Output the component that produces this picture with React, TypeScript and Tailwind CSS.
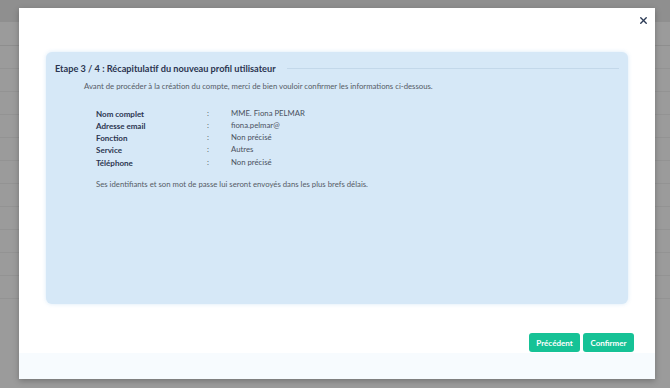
import { X } from 'lucide-react';

const rows: [string, string][] = [
  ['Nom complet', 'MME. Fiona PELMAR'],
  ['Adresse email', 'fiona.pelmar@'],
  ['Fonction', 'Non précisé'],
  ['Service', 'Autres'],
  ['Téléphone', 'Non précisé'],
];

// Greyed page behind the modal
function Backdrop() {
  return (
    <div className="absolute inset-0 bg-[#9b9b9b]">
      <div className="h-[22px] bg-[#8f8f8f]" />
      <div className="h-[24px] border-b border-[#8e8e8e]" />
      {Array.from({ length: 11 }).map((_, i) => (
        <div key={i} className="h-[23px] border-b border-[#939393]" />
      ))}
    </div>
  );
}

export default function App() {
  return (
    <div className="relative w-[670px] h-[388px] overflow-hidden font-['Lato',sans-serif]">
      <Backdrop />
      <div className="absolute left-[19px] top-[8px] w-[636px] h-[371px] bg-white flex flex-col shadow-[0_2px_6px_rgba(0,0,0,0.25)]">
        <div className="relative flex-1 px-[27px] pt-[44px]">
          <button className="absolute right-[6px] top-[7px] text-[#2b3a55]">
            <X size={11} strokeWidth={3} />
          </button>
          <div className="h-[252px] bg-[#d6e8f7] rounded-[6px] shadow-[0_0_4px_rgba(214,232,247,0.9)] px-[9px] pt-[10px]">
            <div className="flex items-center gap-[11px]">
              <h2 className="text-[9.2px] font-bold text-[#2b3550] whitespace-nowrap">
                Etape 3 / 4 : Récapitulatif du nouveau profil utilisateur
              </h2>
              <div className="flex-1 h-px bg-[#c3d8ea]" />
            </div>
            <p className="mt-[5px] ml-[29px] text-[7.75px] text-[#555b66]">
              Avant de procéder à la création du compte, merci de bien vouloir confirmer les informations ci-dessous.
            </p>
            <div className="ml-[41px] mt-[15px] flex flex-col">
              {rows.map(([label, value]) => (
                <div key={label} className="flex h-[12.25px] items-center text-[7.75px]">
                  <span className="w-[111px] text-[8px] font-bold text-[#2b3550]">{label}</span>
                  <span className="w-[24px] text-[#555b66]">:</span>
                  <span className="text-[#4a5160]">{value}</span>
                </div>
              ))}
            </div>
            <p className="ml-[41px] mt-[10px] text-[7.75px] text-[#555b66]">
              Ses identifiants et son mot de passe lui seront envoyés dans les plus brefs délais.
            </p>
          </div>
          <div className="flex justify-end gap-[3px] mt-[29px] -mr-[6px]">
            <button className="h-[19px] w-[51px] rounded-[3px] bg-[#16c296] text-white text-[8px] font-bold">
              Précédent
            </button>
            <button className="h-[19px] w-[51px] rounded-[3px] bg-[#16c296] text-white text-[8px] font-bold">
              Confirmer
            </button>
          </div>
        </div>
        <div className="h-[26px] bg-[#f7fbfe]" />
      </div>
    </div>
  );
}
